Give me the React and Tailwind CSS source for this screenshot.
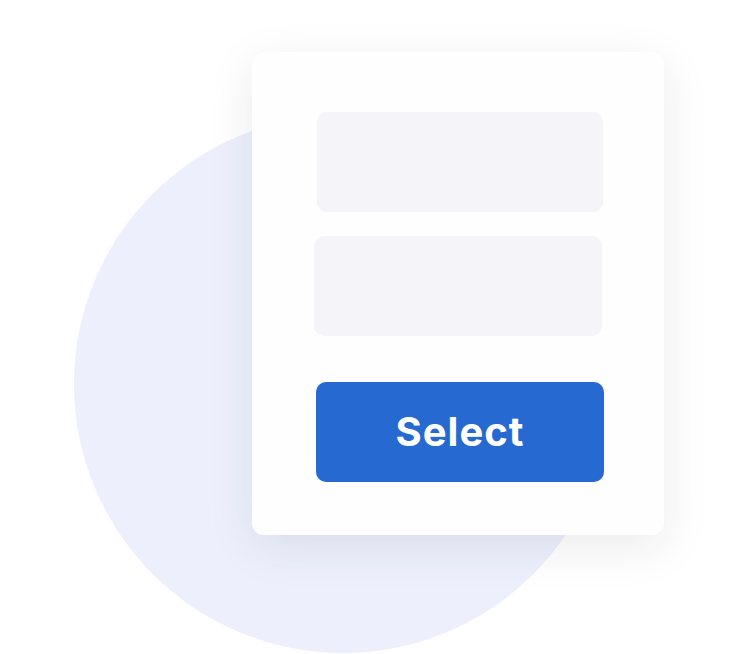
import React from 'react';

const Placeholder = ({ className }) => (
    <div className={`h-[100px] rounded-[10px] bg-[#f4f4f9] ${className}`}></div>
);

const App = () => {
    return (
        <div className="relative w-[738px] h-[654px] overflow-hidden bg-white" style={{ fontFamily: 'Inter, "Liberation Sans", sans-serif' }}>
            {/* decorative backdrop */}
            <div className="absolute left-[74px] top-[115px] w-[538px] h-[538px] rounded-full bg-[#edf0fc]"></div>

            <div className="relative ml-[252px] pt-[52px]">
                <div className="w-[412px] h-[483px] rounded-[12px] bg-[#fefefe] shadow-[0_12px_48px_rgba(30,35,60,0.09)] pt-[60px] pl-[64px]">
                    <div className="flex flex-col w-[288px]">
                        <Placeholder className="w-[286px] ml-[1px]" />
                        <Placeholder className="w-[288px] -ml-[2px] mt-[24px]" />
                        <button className="mt-[46px] w-[288px] h-[100px] rounded-[10px] bg-[#266ad1] text-white text-[40px] font-bold tracking-[0.025em] leading-none">
                            Select
                        </button>
                    </div>
                </div>
            </div>
        </div>
    );
};

export default App;
